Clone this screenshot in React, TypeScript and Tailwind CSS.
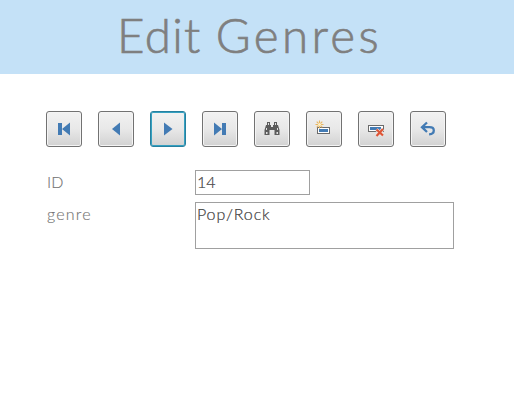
import type { ReactNode } from "react";

const BLUE = "#437bb4";

function ToolButton({ label, active, children }: { label: string; active?: boolean; children: ReactNode }) {
  return (
    <button
      aria-label={label}
      className={
        "size-9 shrink-0 overflow-hidden rounded-[3px] border bg-linear-to-b from-[#f2f2f2] from-0% via-[#e8e8e8] via-50% to-[#d2d2d2] " +
        (active ? "border-[#27809f] ring-1 ring-inset ring-[#35a0c0]" : "border-[#727272] ring-1 ring-inset ring-[#f4f4f4]")
      }
    >
      <svg width="36" height="36" viewBox="0 0 36 36" className="-m-px block max-w-none">
        {children}
      </svg>
    </button>
  );
}

function Toolbar() {
  return (
    <div className="flex gap-4 pl-[46px]">
      <ToolButton label="First record">
        <path d="M12 12h4v12h-4z M16 18l8-6.500v13z" fill={BLUE} />
      </ToolButton>
      <ToolButton label="Previous record">
        <path d="M14 18l8-6.500v13z" fill={BLUE} />
      </ToolButton>
      <ToolButton label="Next record" active>
        <path d="M22.500 18l-8.500-6.500v13z" fill={BLUE} />
      </ToolButton>
      <ToolButton label="Last record">
        <path d="M20 12h4v12h-4z M20 18l-8-6.500v13z" fill={BLUE} />
      </ToolButton>
      <ToolButton label="Find record">
        <path d="M13 11h3v3h1v2h2v-2h1v-3h3v3h1l1.500 5v5h-5v-5h-5v5h-5v-5l1.500-5h1z" fill="#5c5c5c" />
        <path d="M14 12h1v2h-1z M21 12h1v2h-1z M12 17h1v2h-1z M23 17h1v2h-1z M12 21h1.500v2h-1.500z M22.500 21h1.500v2h-1.500z" fill="#e0e0e0" />
      </ToolButton>
      <ToolButton label="New record">
        <rect x="11.500" y="16.500" width="12" height="6" fill="#fff" stroke="#6b6b6b" />
        <path d="M13 18h9v3h-9z" fill={BLUE} />
        <path d="M13.500 9.500v8M9.500 13.500h8M10.700 10.700l5.600 5.600M16.300 10.700l-5.600 5.600" stroke="#e9b660" strokeWidth="1.100" />
        <circle cx="13.500" cy="13.500" r="1.500" fill="#fff0c4" />
      </ToolButton>
      <ToolButton label="Delete record">
        <rect x="10.500" y="14.500" width="15" height="6" fill="#fff" stroke="#6b6b6b" />
        <path d="M12 16h11v3h-11z" fill={BLUE} />
        <path d="M18.500 18.500l6.500 6M25 18l-6.500 7" stroke="#f0e6e2" strokeWidth="3.400" />
        <path d="M18.500 18.500l6.500 6M25 18l-6.500 7" stroke="#dd5536" strokeWidth="2.200" />
      </ToolButton>
      <ToolButton label="Undo">
        <path d="M17 11.500l-5 4.700 5 4.800M13 16.200h6.500c3 0 4.300 1.200 4.300 3.300 0 2.300-1.800 3.700-4.700 3.900" fill="none" stroke={BLUE} strokeWidth="2.300" />
      </ToolButton>
    </div>
  );
}

export default function App() {
  return (
    <div className="h-[400px] w-[514px] overflow-hidden bg-white font-['Lato',sans-serif] font-light">
      <header className="h-[74px] bg-[#c4e1f7] pl-[117px]">
        <h1 className="whitespace-nowrap text-[47.500px] leading-[70px] text-[#7f7f7f] [-webkit-text-stroke:0.700px_#7f7f7f]">
          <span className="tracking-[1.300px]">Edit </span>
          <span className="tracking-[3.400px]">Genres</span>
        </h1>
      </header>
      <main className="pt-[37px]">
        <Toolbar />
        <div className="mt-[23px] flex flex-col gap-[7px] pl-[47px] text-[16px] leading-[21px]">
          <div className="flex">
            <div className="w-[148px] pt-px text-[#767676] [-webkit-text-stroke:0.150px_#767676]">ID</div>
            <div className="h-[25px] w-[115px] border border-[#a0a0a0] pl-px text-[#404040] [-webkit-text-stroke:0.200px_#404040]">14</div>
          </div>
          <div className="flex">
            <div className="w-[148px] pt-px tracking-[1.200px] text-[#767676] [-webkit-text-stroke:0.150px_#767676]">genre</div>
            <div className="h-[47px] w-[259px] border border-[#a0a0a0] pl-px tracking-[0.850px] text-[#404040] [-webkit-text-stroke:0.200px_#404040]">Pop/Rock</div>
          </div>
        </div>
      </main>
    </div>
  );
}
